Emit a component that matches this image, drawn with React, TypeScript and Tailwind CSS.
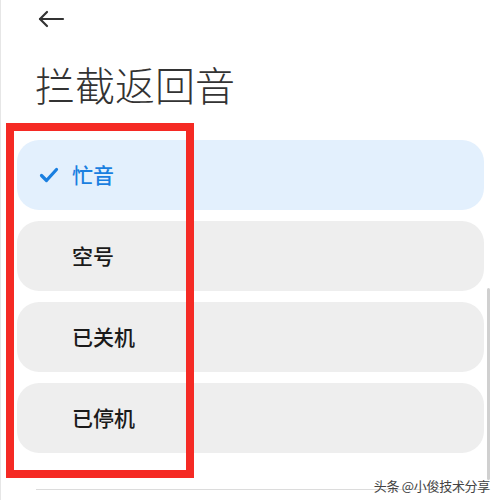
const options = ['忙音', '空号', '已关机', '已停机']

export default function App() {
    const selected = '忙音'
    return (
        <div
            className="relative h-[500px] w-[500px] overflow-hidden border-l border-[#e6e6e6] bg-white"
            style={{ fontFamily: '"Noto Sans CJK SC", "Noto Sans", sans-serif' }}
        >
            {/* header */}
            <div className="flex h-[38px] items-center pl-[36px]">
                <svg width="28" height="20" viewBox="0 0 28 20" fill="none" stroke="#333" strokeWidth="2.2" strokeLinecap="round" strokeLinejoin="round">
                    <path d="M26 10H3" />
                    <path d="M10 3L3 10l7 7" />
                </svg>
            </div>
            <h1 className="ml-[34px] mt-[18px] text-[40px] font-light leading-[56px] text-[#333]">拦截返回音</h1>

            {/* options */}
            <div className="mt-[28px] flex flex-col gap-[11px] px-[16px]">
                {options.map((name) => {
                    const active = name === selected
                    return (
                        <div
                            key={name}
                            className={
                                active
                                    ? 'flex h-[70px] items-center rounded-[22px] bg-[#e3f0fd] pl-[22px]'
                                    : 'flex h-[70px] items-center rounded-[22px] bg-[#eeeeee] pl-[22px]'
                            }
                        >
                            <div className="flex w-[33px] items-center">
                                {active && (
                                    <svg width="20" height="16" viewBox="0 0 20 16" fill="none" stroke="#1a7fe0" strokeWidth="3.2" strokeLinecap="round" strokeLinejoin="round">
                                        <path d="M2.5 8.5l5 5L17.5 2.5" />
                                    </svg>
                                )}
                            </div>
                            <span className={active ? 'text-[21px] font-medium text-[#1a7fe0]' : 'text-[21px] font-medium text-[#1a1a1a]'}>
                                {name}
                            </span>
                        </div>
                    )
                })}
            </div>

            {/* bottom divider */}
            <div className="ml-[35px] mr-[13px] mt-[36px] h-px bg-[#dcdcdc]" />

            {/* scrollbar */}
            <div className="absolute left-[486px] top-[288px] h-[192px] w-[3px] rounded-full bg-[#d0d0d0]" />

            {/* annotation box */}
            <div className="absolute left-[5px] top-[123px] h-[355px] w-[188px] border-[8px] border-[#f52a24]" />

            {/* watermark */}
            <div className="absolute right-[10px] top-[477px] whitespace-nowrap text-[13px] leading-[18px] tracking-[-0.3px] text-[#444]">头条 @小俊技术分享</div>
        </div>
    )
}
